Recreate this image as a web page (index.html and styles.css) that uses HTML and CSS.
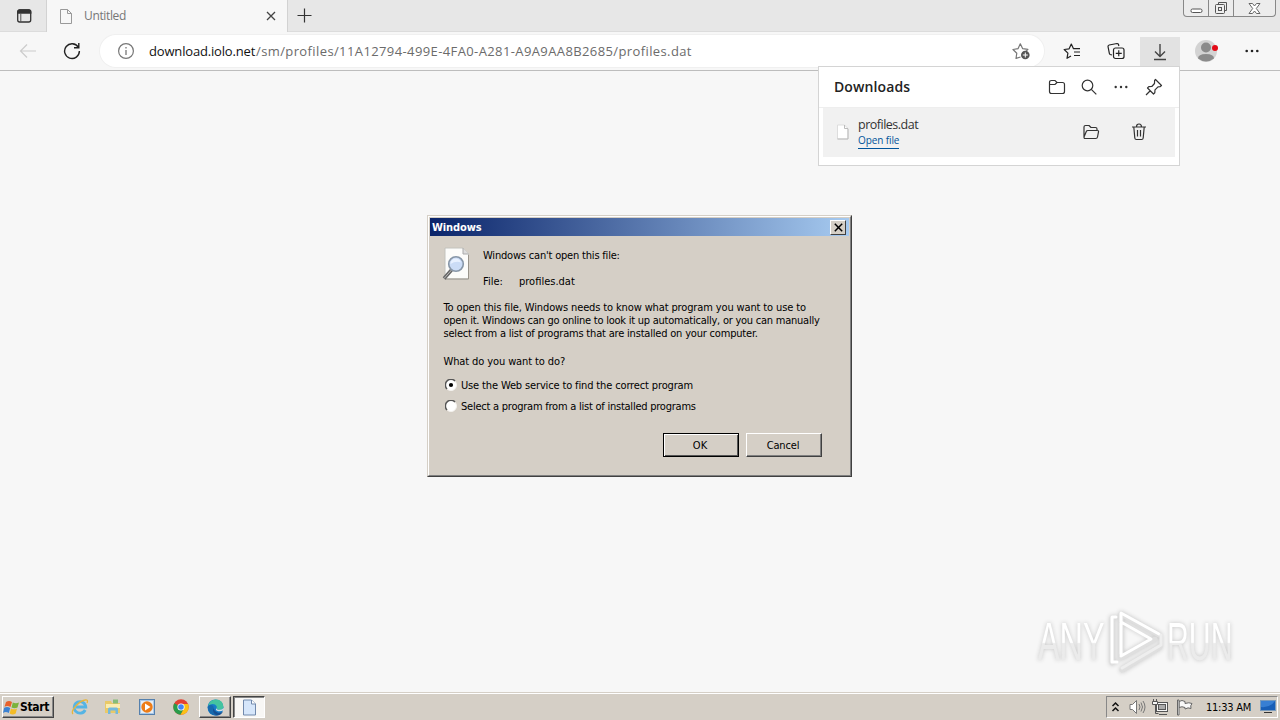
FILE: index.html
```html
<!DOCTYPE html>
<html lang="en">
<head>
<meta charset="utf-8">
<title>Untitled</title>
<link rel="stylesheet" href="styles.css">
</head>
<body>
<div class="desktop">
  <header class="tabstrip">
    <div class="tab-actions">
      <svg width="16" height="16" viewBox="0 0 16 16"><rect x="1.700" y="2" width="13" height="12" rx="2" fill="none" stroke="#333" stroke-width="1.300"/><path d="M1.100 5.800V4q0-2.700 2.700-2.700h9q2.600 0 2.600 2.700v1.800z" fill="#333"/><path d="M4.800 5v9" stroke="#555"/></svg>
    </div>
    <div class="tab">
      <svg width="14" height="17" viewBox="0 0 14 17" fill="none" stroke="#999"><path d="M1.500 1.500h7l4 4v10h-11zM8.500 1.500v4h4"/></svg>
      <span class="tab-title">Untitled</span>
      <svg class="tab-close" width="10" height="10" viewBox="0 0 10 10"><path d="M1 1l8 8M9 1l-8 8" stroke="#444" stroke-width="1.300"/></svg>
    </div>
    <svg class="new-tab" width="15" height="15" viewBox="0 0 15 15"><path d="M7.500 .5v14M.5 7.500h14" stroke="#333" stroke-width="1.200"/></svg>
    <div class="window-buttons">
      <span class="wb min"><svg width="13" height="6" viewBox="0 0 13 6"><rect x="1" y="1" width="11" height="3.500" rx="1.500" fill="#fff" stroke="#555"/></svg></span>
      <span class="wb restore"><svg width="14" height="14" viewBox="0 0 14 14" fill="none" stroke="#555"><path d="M4.500 3.500v-2h8v8h-2"/><rect x="1.500" y="3.500" width="9" height="9" rx="1" fill="#eee"/><rect x="4.500" y="6.500" width="3" height="3"/></svg></span>
      <span class="wb close"><svg width="13" height="11" viewBox="0 0 13 11"><path d="M1 .5h3.500L6.500 3l2-2.500H12L8.300 5.500 12 10.500H8.500L6.500 8l-2 2.500H1L4.700 5.500z" fill="#fff" stroke="#666"/></svg></span>
    </div>
  </header>

  <nav class="toolbar">
    <svg class="back" width="18" height="16" viewBox="0 0 18 16" fill="none" stroke="#ccc" stroke-width="1.200"><path d="M17 8H1.500M8 1.500L1.500 8 8 14.500"/></svg>
    <svg class="reload" width="18" height="18" viewBox="0 0 18 18" fill="none" stroke="#222" stroke-width="1.400"><path d="M15.300 5.200A7.400 7.400 0 1 0 16.400 9M15.800 1v4.700H11"/></svg>
    <div class="address">
      <svg class="info" width="18" height="18" viewBox="0 0 18 18"><circle cx="9" cy="9" r="7.400" fill="none" stroke="#777" stroke-width="1.200"/><path d="M9 8v5M9 5v1.400" stroke="#777" stroke-width="1.300"/></svg>
      <span class="host">download.iolo.net</span><span class="path">/sm/profiles/11A12794-499E-4FA0-A281-A9A9AA8B2685/profiles.dat</span>
      <svg class="star" width="18" height="18" viewBox="0 0 18 18"><path d="M8.500 15L4 16.500l.8-5.300L1 7.500l5-.8L8.300 1.800 10.700 6.700l5.200.7-2 2" fill="none" stroke="#777" stroke-width="1.200" stroke-linejoin="round"/><circle cx="13.300" cy="13" r="4.300" fill="#555"/><path d="M13.300 10.500v5M10.800 13h5" stroke="#fff"/></svg>
    </div>
    <svg class="favorites" width="18" height="18" viewBox="0 0 18 18" fill="none" stroke="#222" stroke-width="1.200" stroke-linejoin="round"><path d="M8 14l-4 2.300.9-5.100L1.200 7.500l4.900-.7L8.300 2l2.200 4.700H17M11 10h6M11 13.500h6"/></svg>
    <svg class="collections" width="18" height="18" viewBox="0 0 18 18" fill="none" stroke="#222" stroke-width="1.200"><path d="M5 13L3.200 12.500q-.8-.5-.9-1.300L1 4.500Q1 3.300 2.200 3L10 1.500q1.200 0 1.500 1l.4 1.500"/><rect x="6.500" y="6" width="10.500" height="10.500" rx="2"/><path d="M11.750 8.300v6M8.750 11.300h6"/></svg>
    <div class="download-button"><svg width="16" height="18" viewBox="0 0 16 18" fill="none" stroke="#444" stroke-width="1.400"><path d="M8 1v12M3 8.500L8 13.500l5-5M2 16.500h12"/></svg></div>
    <svg class="profile" width="24" height="24" viewBox="0 0 24 24"><circle cx="11" cy="12" r="11" fill="#d3d3d3"/><circle cx="11" cy="8.500" r="5" fill="#8b8b8b"/><path d="M3 19.500q0-4.500 8-4.500t8 4.500q-8 6-16 0" fill="#8b8b8b"/><circle cx="20" cy="9" r="3" fill="#e30b17"/></svg>
    <svg class="more" width="14" height="4" viewBox="0 0 14 4" fill="#222"><circle cx="1.700" cy="2" r="1.300"/><circle cx="7" cy="2" r="1.300"/><circle cx="12.300" cy="2" r="1.300"/></svg>
  </nav>

  <main class="page"></main>

  <footer class="taskbar">
    <div class="start">
      <svg width="17" height="17" viewBox="0 0 17 17"><path d="M3 3q3-2 6 0L7.500 8q-3-1.800-6-.2z" fill="#e8622c"/><path d="M9.800 3.500q3 1.500 6.200 0L14.500 8.500q-3 1.500-6 0z" fill="#7bb33c"/><path d="M1.200 8.800q3-1.700 6 .2L5.800 14q-3-1.800-5.800 0z" fill="#3c82d2"/><path d="M8 9.500q3 1.700 6 0L12.700 14.500q-3 1.800-6 0z" fill="#f4bc26"/></svg>
      <span>Start</span>
    </div>
    <svg class="task-ie" width="18" height="18" viewBox="0 0 18 18" fill="none"><path d="M14.200 12A5.800 5.800 0 1 1 14.800 9H5" stroke="#55b4e4" stroke-width="2.800"/><path d="M2 16C-1 13 8 3 14 2q3.500-.7 2 3" stroke="#e8b53b" stroke-width="1.300"/></svg>
    <svg class="task-explorer" width="18" height="18" viewBox="0 0 18 18"><path d="M1 3h6l1 2h8v10H1z" fill="#e9c968"/><path d="M2 6h14v4H2z" fill="#fbedb0"/><path d="M9 1.500h5v4H9z" fill="#86bd79"/><path d="M4 16v-5q0-1.500 1.500-1.500h7Q14 9.500 14 11v5h-2.500v-3.500h-5V16z" fill="#75b9dc"/></svg>
    <svg class="task-player" width="16" height="16" viewBox="0 0 16 16"><rect x=".5" y=".5" width="15" height="15" fill="#a9c9e9" stroke="#5580ad"/><rect x="2" y="2" width="12" height="12" fill="#e6edf4"/><circle cx="8" cy="8" r="5.700" fill="#ed7c17"/><path d="M6 4.500v7L11.500 8z" fill="#fff"/></svg>
    <svg class="task-chrome" width="16" height="16" viewBox="0 0 16 16"><circle cx="8" cy="8" r="7.700" fill="#e34133"/><path d="M8 8L1.300 4.200A7.700 7.700 0 0 0 7.500 15.700L11.500 9z" fill="#299c4b"/><path d="M8 5h7.100A7.700 7.700 0 0 1 7.500 15.700L10.700 10z" fill="#fbc116"/><circle cx="8" cy="8" r="3.600" fill="#fff"/><circle cx="8" cy="8" r="2.800" fill="#4285f4"/></svg>
    <div class="task-button edge">
      <svg width="17" height="17" viewBox="0 0 17 17"><circle cx="8.500" cy="8.500" r="8" fill="#167cc9"/><path d="M1 7Q3 .5 9 .6q7 .4 7.400 6.800.1 3-3.400 3.300-3.500.3-3.300-1.700Q10.500 7 8 5.500 4.500 4 1 7" fill="#44c4a0"/><path d="M6.500 7.500Q4 14 10.500 16.200 6 17.300 3 14 .3 10.500 1 7q3-2 5.500.5" fill="#1769ad"/><path d="M7 8q-.5 4 3.500 5.500 3 .8 5.500-1-2 4-6 4Q4 14 7 8" fill="#164f91"/><path d="M9.700 9q-.4 2 3.300 1.700 2.700-.2 3.500-2v2.500q-3.500 2-6.500.5Q8 11 9.700 9" fill="#d5dfe4"/></svg>
    </div>
    <div class="task-button file active">
      <svg width="15" height="17" viewBox="0 0 15 17"><path d="M1.500 1h8l4 4v11h-12z" fill="#d6e6fa" stroke="#7189ac"/><path d="M9.500 1v4h4" fill="#fff" stroke="#7189ac"/></svg>
    </div>
    <div class="tray">
      <svg width="9" height="12" viewBox="0 0 9 12" fill="none" stroke="#111" stroke-width="1.500"><path d="M1.500 5l3-3 3 3M1.500 10l3-3 3 3"/></svg>
      <svg class="sound" width="17" height="16" viewBox="0 0 17 16" fill="none" stroke="#777"><path d="M1 5.500h2.500l4-4v13l-4-4H1z" fill="#fff"/><path d="M10 5q2 3 0 6M12 3.500q3 4.500 0 9M14 2q4 6 0 12"/></svg>
      <svg class="network" width="17" height="17" viewBox="0 0 17 17" fill="#f5f5f5" stroke="#555"><rect x="4.500" y="3.500" width="11" height="9"/><rect x="6.500" y="5.500" width="7" height="5" fill="#aaa"/><path d="M7 15.500h8M3.500 5v9.500h3" fill="none"/><path d="M.5 2.500h5v3h-5zM1.500 0v2M4.500 0v2"/></svg>
      <svg class="flag" width="18" height="17" viewBox="0 0 18 17" fill="#f8f8f8" stroke="#666"><path d="M3 2.500q3-2 6 0v2q4-1.500 7 0-2 2-1 5-3-1.500-6 .5v-1.500q-3-1.500-6 0z"/><path d="M1.500 1h1.500v15H1.500z"/></svg>
      <span class="clock">11:33 AM</span>
      <svg class="show-desktop" width="16" height="14" viewBox="0 0 16 14"><rect x=".5" y=".5" width="15" height="10" fill="#195fb7" stroke="#7a9bbc"/><path d="M1 10V1h14Q10 8 1 7" fill="#387fd3"/><path d="M4 12.500h8" stroke="#333"/></svg>
    </div>
  </footer>

  <aside class="downloads">
    <div class="downloads-head">
      <h1>Downloads</h1>
      <svg class="dl-folder" width="18" height="16" viewBox="0 0 18 16" fill="none" stroke="#333" stroke-width="1.200"><path d="M1.500 12.500v-9Q1.500 1.500 3.500 1.500H7l2 2h5.500q2 0 2 2v7q0 2-2 2h-11q-2 0-2-2zM1.500 5.500H7l2-2"/></svg>
      <svg class="dl-search" width="16" height="16" viewBox="0 0 16 16" fill="none" stroke="#333" stroke-width="1.200"><circle cx="6.500" cy="6.500" r="5.300"/><path d="M10.300 10.300l5 5"/></svg>
      <svg class="dl-more" width="14" height="4" viewBox="0 0 14 4" fill="#333"><circle cx="1.700" cy="2" r="1.200"/><circle cx="7" cy="2" r="1.200"/><circle cx="12.300" cy="2" r="1.200"/></svg>
      <svg class="dl-pin" width="18" height="18" viewBox="0 0 18 18" fill="none" stroke="#333" stroke-width="1.200" stroke-linejoin="round"><path d="M10.500 1.500l6 6-1.500 1.200-2 .1-3 3-.2 3-1.300 1.200-6-6L3.800 8.700l3-.2 2.700-3 .1-3zM5.500 12.500l-4.500 4.500"/></svg>
    </div>
    <div class="download-item">
      <svg class="item-file" width="13" height="16" viewBox="0 0 13 16"><path d="M1.500 1h7l3.500 3.500V15H1.500z" fill="#fff" stroke="#ddd"/><path d="M8.500 1v3.500H12M12 5v10H1.500" fill="none" stroke="#bbb"/></svg>
      <div class="item-text"><span class="item-name">profiles.dat</span><a class="item-link">Open file</a></div>
      <svg class="item-folder" width="18" height="16" viewBox="0 0 18 16" fill="none" stroke="#333" stroke-width="1.200" stroke-linejoin="round"><path d="M2 13V3q0-1.500 1.500-1.500H7l2 2h4.500Q15 3.500 15 5v1.500M2 13L4.300 7.500q.4-1 1.500-1h9.700q1.300 0 1 1.300l-1 5.200q-.3 1.500-1.700 1.500H3q-1 0-1-1.500"/></svg>
      <svg class="item-trash" width="16" height="18" viewBox="0 0 16 18" fill="none" stroke="#333" stroke-width="1.200"><path d="M1 4h14M2.800 4l1 11q.2 1.500 1.500 1.500h5.400q1.300 0 1.500-1.500l1-11M5.500 4q0-3 2.500-3t2.500 3M6.500 7v6.500M9.500 7v6.500"/></svg>
    </div>
  </aside>

  <section class="dialog">
    <div class="dialog-face">
      <div class="titlebar"><span class="dialog-title">Windows</span><button class="dialog-close"><svg width="9" height="9" viewBox="0 0 9 9"><path d="M.8 .8l7.400 7.400M8.200 .8L.8 8.200" stroke="#000" stroke-width="1.500"/></svg></button></div>
      <div class="dialog-body">
        <div class="intro">
          <svg width="30" height="34" viewBox="0 0 30 34"><path d="M3 1h18l5.500 6v25H3z" fill="#fcfcfa" stroke="#c2c2bd"/><path d="M21 1v6h5.500" fill="#ddd" stroke="#aaa"/><path d="M26.500 8v24H3" fill="none" stroke="#99948b"/><path d="M9.500 23L2 31.500" stroke="#666" stroke-width="3.500"/><path d="M9.500 23L2 31.500" stroke="#bbb" stroke-width="1"/><circle cx="14" cy="17" r="7.300" fill="#cbdcf6" stroke="#8796a7" stroke-width="1.600"/><path d="M8.500 17q0-5.500 6-5.500 4 1 4.500 4-5-2-10.500 1.500" fill="#e8f1ff"/></svg>
          <div class="intro-text"><div class="t headline">Windows can't open this file:</div><div class="file-row"><span class="t file-label">File:</span><span class="t file-name">profiles.dat</span></div></div>
        </div>
        <div class="copy"><div class="t line1">To open this file, Windows needs to know what program you want to use to</div><div class="t line2">open it. Windows can go online to look it up automatically, or you can manually</div><div class="t line3">select from a list of programs that are installed on your computer.</div></div>
        <div class="question t">What do you want to do?</div>
        <div class="options">
          <div class="option"><svg class="radio" width="12" height="12" viewBox="0 0 12 12"><circle cx="6" cy="6" r="5.500" fill="#fff" stroke="#f4f2ee"/><path d="M2 10A5.500 5.500 0 0 1 10 2" fill="none" stroke="#555" stroke-width="1.500"/><circle cx="6" cy="6" r="2.100"/></svg><span class="t opt1">Use the Web service to find the correct program</span></div>
          <div class="option"><svg class="radio" width="12" height="12" viewBox="0 0 12 12"><circle cx="6" cy="6" r="5.500" fill="#fff" stroke="#f4f2ee"/><path d="M2 10A5.500 5.500 0 0 1 10 2" fill="none" stroke="#555" stroke-width="1.500"/></svg><span class="t opt2">Select a program from a list of installed programs</span></div>
        </div>
        <div class="buttons"><button class="button ok"><span>OK</span></button><button class="button"><span>Cancel</span></button></div>
      </div>
    </div>
  </section>

  <div class="watermark">
    <span class="any">ANY</span>
    <svg width="58" height="66" viewBox="0 0 58 66" fill="none" stroke-linecap="round" stroke-linejoin="round"><g stroke="#dfdfdf" stroke-width="5"><path d="M4 10v45M13 50V6l38 21M13 50l34-19M14 62l38-23"/></g><path d="M8 9H4v45h5M13 46V5l38 21M13 14l30 17-30 17" stroke="#fff" stroke-width="3"/><path d="M14 60l39-23V27" stroke="#eee" stroke-width="3"/></svg>
    <span class="run">RUN</span>
  </div>
</div>
</body>
</html>
```
FILE: styles.css
```css
* { box-sizing: border-box; }
body { margin: 0; overflow: hidden; font-family: "Open Sans", "Noto Sans", sans-serif; }
svg { display: block; flex: none; }
button { padding: 0; font: inherit; border: 0; border-radius: 0; }
.desktop { position: relative; width: 1280px; height: 720px; display: flex; flex-direction: column; background: #f7f7f7; overflow: hidden; }

.tabstrip { height: 32px; display: flex; background: #e7e7e7; border-bottom: 1px solid #dcdcdc; flex: none; }
.tab-actions { width: 46px; padding: 8px 0 0 16px; }
.tab { height: 32px; width: 242px; display: flex; align-items: center; padding: 0 11px 0 12px; background: #f7f7f7; border: solid #d2d2d2; border-width: 0 1px; }
.tab-title { flex: 1; margin-left: 11px; font-size: 12px; line-height: 16px; letter-spacing: -.35px; color: #767676; }
.new-tab { margin: 8px 0 0 9px; }
.window-buttons { display: flex; width: 93px; height: 17px; margin-left: auto; margin-right: 4px; border: 1px solid #888; border-top: 0; border-radius: 0 0 4px 4px; overflow: hidden; background: #ececec; }
.wb { display: flex; justify-content: center; align-items: center; }
.wb.min { width: 25px; padding-top: 5px; border-right: 1px solid #888; }
.wb.restore { width: 25px; border-right: 1px solid #888; }
.wb.close { flex: 1; }

.toolbar { height: 39px; flex: none; display: flex; align-items: center; border-bottom: 1px solid #bdbdbd; background: #f7f7f7; }
.back { margin-left: 19px; }
.reload { margin-left: 26px; }
.address { width: 944px; height: 32px; margin-left: 19px; padding: 0 14px 0 17px; border-radius: 16px; display: flex; align-items: center; background: #fff; box-shadow: 0 0 0 1px #f0f0f0; font-size: 13px; white-space: nowrap; }
.host { margin-left: 14px; width: 107px; color: #111; letter-spacing: -.17px; }
.path { color: #6b6b6b; letter-spacing: .39px; }
.star { margin-left: auto; }
.favorites { margin-left: 19px; }
.collections { margin-left: 26px; }
.download-button { width: 40px; height: 33px; align-self: flex-end; margin-left: 15px; padding-bottom: 4px; display: flex; justify-content: center; align-items: center; background: #e2e2e2; }
.profile { margin-left: 15px; }
.more { margin-left: 26px; }
.page { flex: 1; background: #f7f7f7; }

.taskbar { height: 28px; flex: none; display: flex; align-items: center; padding: 2px 2px 1px; background: #d5cfc6; border-top: 1px solid #d5cfc6; box-shadow: inset 0 1px #fff; font-family: "DejaVu Sans Condensed", "DejaVu Sans", sans-serif; }
.start { width: 52px; height: 22px; display: flex; align-items: center; border: 1px solid; border-color: #fff #444 #444 #fff; box-shadow: inset -1px -1px #888; font-size: 12px; font-weight: bold; letter-spacing: -.3px; }
.task-ie { margin-left: 17px; }
.task-explorer { margin-left: 15px; }
.task-player { margin-left: 17px; }
.task-chrome { margin-left: 18px; }
.task-button { width: 32px; height: 22px; display: flex; align-items: center; justify-content: center; border: 1px solid; border-color: #fff #444 #444 #fff; box-shadow: inset -1px -1px #888; }
.edge { margin-left: 10px; }
.file { margin-left: 2px; }
.active { background: #f8f7f5; border-color: #444 #fff #fff #444; box-shadow: inset 1px 1px #888; }
.tray { width: 172px; height: 22px; margin-left: auto; padding: 0 1px 0 4px; display: flex; align-items: center; border: 1px solid; border-color: #888 #fff #fff #888; }
.sound { margin-left: 9px; }
.network { margin-left: 6px; }
.flag { margin-left: 7px; }
.clock { width: 48px; margin-left: 12px; font-size: 11px; letter-spacing: -.25px; white-space: nowrap; }
.show-desktop { margin-left: 7px; }

.downloads { position: absolute; left: 818px; top: 66px; width: 362px; height: 100px; background: #fff; border: 1px solid #d4d4d4; }
.downloads-head { height: 41px; display: flex; align-items: center; padding-left: 15px; border-bottom: 1px solid #eee; }
.downloads h1 { width: 214px; margin: 0; font-size: 14px; line-height: 20px; font-weight: 600; color: #222; letter-spacing: .1px; }
.dl-search { margin-left: 15px; }
.dl-more { margin-left: 17px; }
.dl-pin { margin-left: 17px; }
.download-item { height: 49px; margin: 0 4px; padding: 0 0 2px 13px; display: flex; align-items: center; background: #f1f1f1; }
.item-text { width: 214px; margin: 2px 0 0 9px; display: flex; flex-direction: column; align-items: flex-start; }
.item-name { font-size: 12.500px; line-height: 18px; color: #333; letter-spacing: -.5px; }
.item-link { font-size: 10px; line-height: 13px; padding-bottom: 1px; color: #00549b; border-bottom: 1px solid #00549b; letter-spacing: -.1px; }
.item-folder { margin-left: 10px; }
.item-trash { margin-left: 31px; }

.dialog { position: absolute; left: 427px; top: 215px; width: 425px; height: 262px; border: 1px solid; border-color: #d5cfc6 #404040 #404040 #d5cfc6; font-family: "DejaVu Sans Condensed", "DejaVu Sans", sans-serif; font-size: 11px; color: #000; }
.dialog-face { height: 100%; padding: 1px 1px 0; border: 1px solid; border-color: #fff #808080 #808080 #fff; background: #d5cfc6; }
.titlebar { height: 18px; padding: 0 3px 0 2px; display: flex; align-items: center; justify-content: space-between; background: linear-gradient(90deg, #0a246a, #a6caf0); }
.dialog-title { color: #fff; font-weight: bold; letter-spacing: -.1px; }
.dialog-close { width: 16px; height: 15px; display: flex; align-items: center; justify-content: center; background: #d5cfc6; border: 1px solid; border-color: #fff #404040 #404040 #fff; }
.dialog-body { padding: 11px 27px 0 12px; }
.t { white-space: nowrap; line-height: 13px; }
.intro { display: flex; height: 54px; }
.intro-text { margin-left: 11px; padding-top: 2px; }
.headline { letter-spacing: -.19px; }
.file-row { display: flex; margin-top: 13px; }
.file-label { width: 36px; }
.copy, .question { margin-left: 1.500px; }
.line1 { letter-spacing: -.13px; }
.line2 { letter-spacing: -.24px; }
.line3 { letter-spacing: -.19px; }
.question { margin-top: 15px; letter-spacing: -.11px; }
.options { display: flex; flex-direction: column; gap: 8px; margin: 11px 0 0 3px; }
.option { display: flex; align-items: center; }
.opt1 { letter-spacing: -.14px; }
.opt2 { letter-spacing: -.235px; }
.radio { margin: -2px 4px 0 0; }
.buttons { display: flex; justify-content: flex-end; gap: 7px; margin-top: 20px; }
.button { width: 76px; height: 24px; padding-right: 2px; color: #000; background: #d5cfc6; border: 1px solid; border-color: #fff #404040 #404040 #fff; box-shadow: inset -1px -1px #808080; }
.button:last-child { letter-spacing: -.15px; }
.ok { border-color: #000; box-shadow: inset 1px 1px #fff, inset -1px -1px #555; }

.watermark { position: absolute; left: 1038px; top: 608px; width: 196px; height: 66px; display: flex; align-items: center; font: 54px/66px "Liberation Sans", sans-serif; filter: drop-shadow(0 0 2px #c4c4c4); }
.watermark span { display: block; flex: none; transform-origin: left; color: transparent; background: linear-gradient(#fff 52%, #ebebeb 54%); background-clip: text; -webkit-background-clip: text; }
.watermark .any { width: 112px; transform: scaleX(.6); }
.watermark svg { margin-left: -42px; }
.watermark .run { width: 120px; margin-left: 1px; transform: scaleX(.56); }
```
